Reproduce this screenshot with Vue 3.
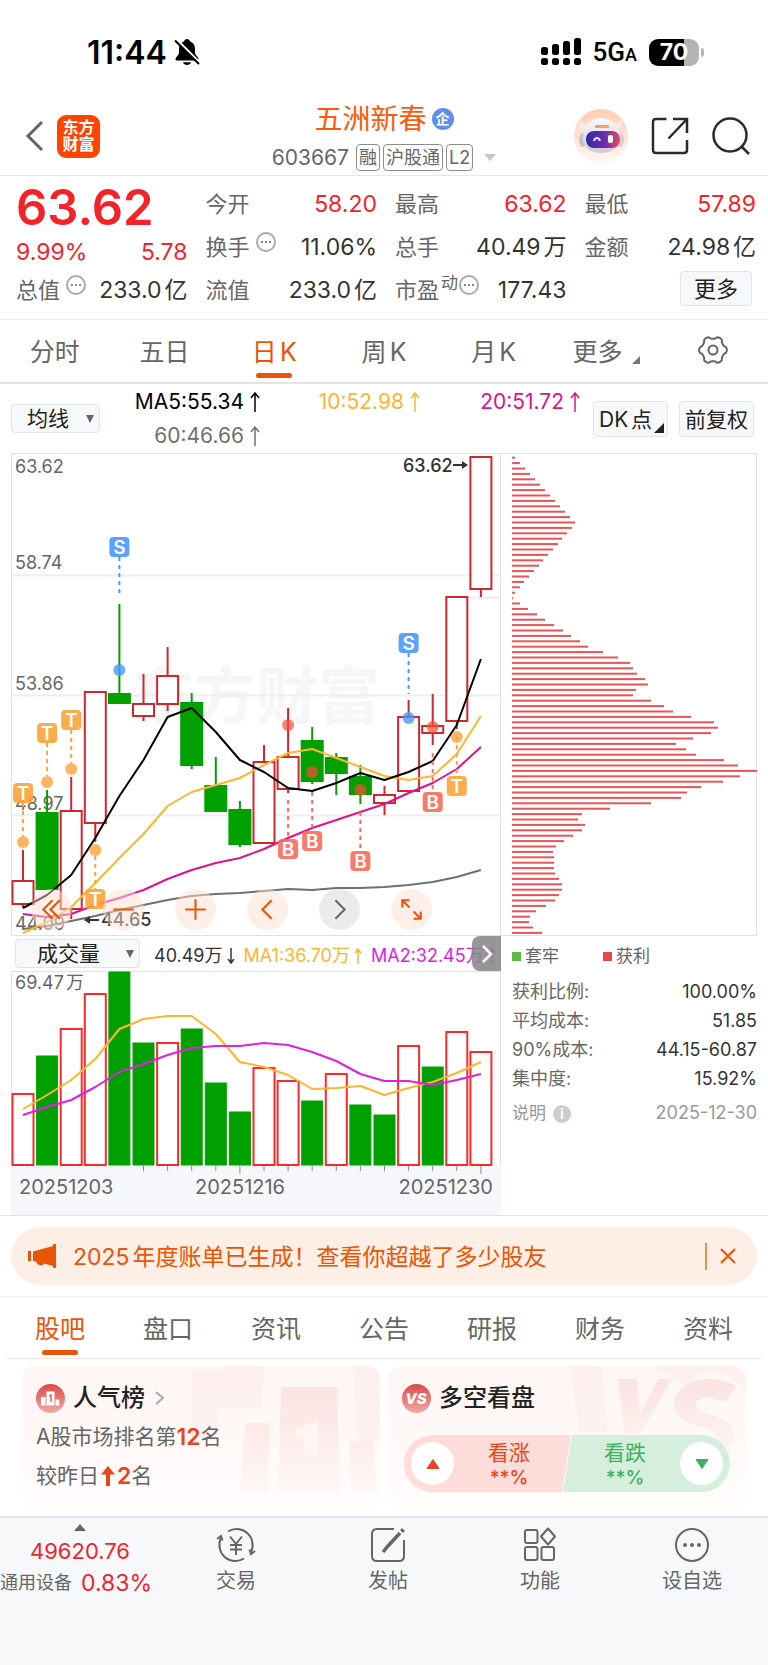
<script setup>
import {computed, ref} from "vue";

const stockTags = ['融', '沪股通', 'L2'];

const quoteColumns = [
  [
    {label: '今开', value: '58.20', red: true},
    {label: '换手', value: '11.06%', tip: true},
    {label: '流值', value: '233.0亿'},
  ],
  [
    {label: '最高', value: '63.62', red: true},
    {label: '总手', value: '40.49万'},
    {label: '市盈', sup: '动', value: '177.43', tip: true},
  ],
  [
    {label: '最低', value: '57.89', red: true},
    {label: '金额', value: '24.98亿'},
    {more: true},
  ],
];

const periods = ['分时', '五日', '日K', '周K', '月K'];
const activePeriod = ref('日K');

const averages = [
  {text: 'MA5:55.34', tone: 'black'},
  {text: '10:52.98', tone: 'yellow'},
  {text: '20:51.72', tone: 'pink'},
  {text: '60:46.66', tone: 'gray'},
];

const infoTabs = ['股吧', '盘口', '资讯', '公告', '研报', '财务', '资料'];
const activeInfo = ref('股吧');

const chipStats = [
  ['获利比例:', '100.00%'],
  ['平均成本:', '51.85'],
  ['90%成本:', '44.15-60.87'],
  ['集中度:', '15.92%'],
];

// x of the centre of the candle with the given index
const cx = (i) => Math.round((12 + i * 24.1) * 10) / 10;
const toPoints = (list) => list.map((y, i) => `${cx(i)},${y}`).join(' ');

// [rising, high, top, bottom, low]
const candles = [
  [1, 397, 428, 451, 455], [0, 337, 360, 436, 436], [1, 324, 358, 456, 466], [1, 239, 239, 370, 389],
  [0, 151, 241, 250, 251], [1, 221, 251, 263, 268], [1, 194, 223, 251, 258], [0, 240, 250, 312, 316],
  [0, 304, 333, 358, 358], [0, 348, 357, 391, 394], [1, 292, 309, 390, 391], [1, 255, 304, 336, 340],
  [0, 274, 288, 328, 331], [0, 300, 305, 320, 342], [0, 312, 324, 341, 351], [1, 333, 342, 350, 362],
  [1, 247, 264, 338, 338], [1, 241, 273, 280, 292], [1, 144, 144, 268, 276], [1, 4, 4, 136, 144],
].map(([up, high, top, bottom, low], i) => ({up, high, top, bottom, low, x: cx(i)}));

const maLines = [
  {tone: 'gray', list: [476, 473, 468, 463, 457, 452, 447, 443, 441, 440, 438, 436, 437, 435, 435, 434, 432, 429, 424, 417]},
  {tone: 'pink', list: [461, 464, 461, 452, 445, 437, 426, 417, 410, 405, 396, 385, 375, 367, 359, 351, 340, 330, 316, 294]},
  {tone: 'yellow', list: [480, 469, 454, 430, 405, 381, 353, 339, 332, 325, 312, 300, 296, 305, 314, 323, 327, 323, 301, 263]},
  {tone: 'black', list: [455, 442, 422, 385, 343, 307, 264, 255, 279, 307, 319, 335, 338, 330, 320, 327, 319, 308, 272, 206]},
];

// [index, letter, dot y, badge y, dashed line from, to]
const markers = [
  [0, 'T', 389, 340, 350, 383], [1, 'T', 329, 280, 290, 323], [2, 'T', 316, 267, 277, 310], [3, 'T', 397, 446, 403, 436],
  [4, 'S', 217, 94, 104, 144], [11, 'B', 272, 396, 347, 386], [12, 'B', 319, 388, 339, 378], [14, 'B', 337, 408, 359, 398],
  [16, 'S', 265, 190, 200, 241], [17, 'B', 274, 349, 300, 339], [18, 'T', 284, 333, 284, 323],
].map(([i, letter, dot, badge, from, to]) => ({x: cx(i), letter, dot, badge, from, to}));

const priceLabels = [['63.62', 20], ['58.74', 116], ['53.86', 237], ['48.97', 357], ['44.09', 477]];

// [rising, top]
const volumes = [
  [1, 123], [0, 85], [1, 58], [1, 23], [0, 1], [0, 72], [1, 72], [0, 58], [0, 112], [0, 141],
  [1, 97], [1, 110], [0, 130], [1, 103], [0, 134], [0, 144], [1, 75], [0, 96], [1, 61], [1, 81],
].map(([up, top], i) => ({up, top, x: cx(i)}));

const volumeLines = [
  {tone: 'yellow', list: [138, 124, 109, 88, 58, 48, 45, 45, 63, 91, 96, 104, 118, 117, 115, 124, 117, 111, 102, 91]},
  {tone: 'magenta', list: [144, 136, 129, 116, 101, 93, 84, 77, 75, 75, 72, 74, 81, 90, 103, 110, 110, 114, 109, 103]},
];

const ticks = Array.from({length: 15}, (_, n) => n + 5);

// length of every bar of the chip distribution, from the highest price down
const chips = [
  3, 8, 13, 18, 23, 28, 33, 38, 43, 48, 53, 58, 63, 60, 55, 50, 46, 41, 36, 31, 27, 22, 17, 12, 8, 3,
  1, 8, 16, 25, 33, 42, 51, 59, 68, 76, 91, 106, 118, 121, 125, 133, 136, 124, 121, 139, 152, 161, 179, 202, 206,
  199, 181, 164, 174, 184, 212, 226, 245, 228, 211, 189, 175, 169, 139, 98, 70, 66,
  73, 70, 61, 52, 44, 41, 42, 42, 42, 43, 47, 50, 50, 47, 43, 34, 24, 18, 17, 21, 30,
];

const gearPath = computed(() => {
  const points = [];
  for (let a = 0; a < 360; a += 6) {
    const t = a * Math.PI / 180;
    const r = 12.6 + 1.3 * Math.tanh(2 * Math.cos(6 * t));
    points.push(`${(15 + r * Math.cos(t)).toFixed(1)},${(15 + r * Math.sin(t)).toFixed(1)}`);
  }
  return `M${points.join('L')}Z`;
});
</script>

<template>
  <div class="page">
    <div class="status">
      <div class="status__left">
        <span class="status__time">11:44</span>
        <svg width="26" height="28" viewBox="0 0 26 28" aria-hidden="true">
          <path d="M13 1c-1.600 0-2.600 1-2.800 2.200C6.800 4.400 5 7.200 5 10.500v4.500c0 2-3.500 4-3.500 6 0 1 .6 1.500 1.500 1.500h20c.9 0 1.500-.5 1.500-1.500 0-2-3.500-4-3.500-6v-4.500c0-3.300-1.800-6.100-5.200-7.300C15.600 2 14.600 1 13 1z" fill="#000"/>
          <path d="M9 24.200h8c-.6 1.800-2 2.800-4 2.800s-3.400-1-4-2.800z" fill="#000"/>
          <path d="M2.500 1.500 27 26" stroke="#fff" stroke-width="2.500"/>
          <path d="M1 2.500 25 26" stroke="#000" stroke-width="2"/>
        </svg>
      </div>
      <div class="status__right">
        <svg width="40" height="28" viewBox="0 0 40 28" aria-hidden="true">
          <g v-for="n in 4" :key="n">
            <rect :x="(n - 1) * 11" :y="[9, 6, 3, 0][n - 1]" width="7" :height="[8, 11, 14, 17][n - 1]" rx="2.500"/>
            <rect :x="(n - 1) * 11" y="20" width="7" height="7" rx="2.500"/>
          </g>
        </svg>
        <span class="status__net">5G<small>A</small></span>
        <span class="battery"><span class="battery__body">70</span><span class="battery__tip"></span></span>
      </div>
    </div>

    <header class="header">
      <div class="header__left">
        <button class="plain" aria-label="返回">
          <svg width="20" height="32" viewBox="0 0 20 32" fill="none" stroke="#666" stroke-width="3"><path d="M17 2 3 16l14 14"/></svg>
        </button>
        <a class="logo" href="#">东方<br>财富</a>
      </div>
      <div class="header__center">
        <h1 class="title">五洲新春<span class="title__badge">企</span></h1>
        <div class="sub">
          <span class="sub__code">603667</span>
          <span v-for="tag in stockTags" :key="tag" class="sub__tag">{{ tag }}</span>
          <span class="sub__arrow"></span>
        </div>
      </div>
      <div class="header__right">
        <button class="plain" aria-label="助手">
          <svg width="54" height="54" viewBox="0 0 54 54">
            <defs>
              <linearGradient id="halo" x1="0" y1="0" x2="0" y2="1">
                <stop offset="0" stop-color="#ffcdb2"/><stop offset="1" stop-color="#fff8f4"/>
              </linearGradient>
              <linearGradient id="visor" x1="0" y1="0" x2="1" y2="0">
                <stop offset="0" stop-color="#2f2aa0"/><stop offset=".55" stop-color="#6a2bb0"/><stop offset="1" stop-color="#ee4a5c"/>
              </linearGradient>
              <linearGradient id="shell" x1="0" y1="0" x2="0" y2="1">
                <stop offset="0" stop-color="#fdfafa"/><stop offset="1" stop-color="#cfc9d2"/>
              </linearGradient>
            </defs>
            <circle cx="27" cy="27" r="27" fill="url(#halo)"/>
            <path d="M6 12c-2 5 1 9 6 10l5-7c-4 1-9 1-11-3zM47 11c2 5 0 9-5 10l-6-7c5 1 9 1 11-3z" fill="#f3ecec"/>
            <ellipse cx="9" cy="31" rx="4" ry="7" fill="#c5c0ca"/>
            <ellipse cx="46" cy="31" rx="4" ry="7" fill="#d5cfd6"/>
            <path d="M27 9c11 0 19 8 19 19 0 11-8 16-19 16S9 39 9 29C9 17 16 9 27 9z" fill="url(#shell)"/>
            <rect x="21" y="16" width="14" height="3" rx="1" fill="#eba374"/>
            <rect x="12" y="22" width="34" height="17" rx="8" fill="url(#visor)"/>
            <path d="M20 32c1-4 5-4 6 0" fill="none" stroke="#f6d8ff" stroke-width="2"/>
            <rect x="34" y="26" width="5" height="8" rx="2" fill="#fff"/>
          </svg>
        </button>
        <button class="plain" aria-label="分享">
          <svg width="38" height="38" viewBox="0 0 38 38" fill="none" stroke="#2b2b2b" stroke-width="2.500">
            <path d="M15.500 2H5Q2 2 2 5v28q0 3 3 3h28q3 0 3-3V23M22 2h14v14M36 2 17.500 21.500"/>
          </svg>
        </button>
        <button class="plain" aria-label="搜索">
          <svg width="38" height="38" viewBox="0 0 38 38" fill="none" stroke="#2b2b2b" stroke-width="2.500">
            <circle cx="18" cy="18" r="16.500"/><path d="m29 29 8 8"/>
          </svg>
        </button>
      </div>
    </header>

    <section class="quote">
      <div class="quote__col">
        <div class="quote__price">63.62</div>
        <div class="quote__change"><span>9.99%</span><span>5.78</span></div>
        <div class="quote__row">
          <span class="quote__label">总值<i class="tip"><i></i></i></span>
          <span class="quote__value">233.0亿</span>
        </div>
      </div>
      <div v-for="(column, c) in quoteColumns" :key="c" class="quote__col">
        <div v-for="(item, r) in column" :key="r" class="quote__row">
          <button v-if="item.more" class="box-button quote__more">更多</button>
          <template v-else>
            <span class="quote__label">{{ item.label }}<sup v-if="item.sup">{{ item.sup }}</sup><i v-if="item.tip" class="tip" :class="{'tip--tight': item.sup}"><i></i></i></span>
            <span class="quote__value" :class="{'quote__value--red': item.red}">{{ item.value }}</span>
          </template>
        </div>
      </div>
    </section>

    <nav class="tabs">
      <button v-for="name in periods" :key="name" class="tab" :class="{'tab--active': name === activePeriod}" @click="activePeriod = name">{{ name }}</button>
      <button class="tab">更多<span class="corner corner--gray"></span></button>
      <button class="tab" aria-label="设置">
        <svg width="30" height="30" viewBox="0 0 30 30" fill="none" stroke="#666" stroke-width="2" stroke-linejoin="round">
          <path :d="gearPath"/><circle cx="15" cy="15" r="4.500"/>
        </svg>
      </button>
    </nav>

    <section class="ma">
      <label class="select select--ma">
        <select aria-label="均线"><option>均线</option></select>
      </label>
      <div class="ma__list">
        <span v-for="item in averages" :key="item.text" :class="'text-' + item.tone">{{ item.text }}<svg class="arrow" width="10" height="20" viewBox="0 0 10 20" fill="none" stroke="currentColor" stroke-width="1.500"><path d="M5 20V1M1 6l4-5 4 5"/></svg></span>
      </div>
      <button class="box-button ma__button">DK点<span class="corner"></span></button>
      <button class="box-button ma__button ma__button--last">前复权</button>
    </section>

    <section class="charts">
      <div class="charts__left">
        <div class="kline">
          <svg class="chart" viewBox="0 0 490 483">
            <text x="121" y="266" class="watermark">东方财富</text>
            <path d="M0 122.500h490M0 242.500h490M0 362.500h490M450 144.500h40" class="grid"/>
            <path d="M490 .5H.5v482H490M489.500 0v483" class="frame"/>
            <text v-for="[text, y] in priceLabels" :key="text" x="4" :y="y" class="label">{{ text }}</text>
            <g v-for="c in candles" :key="c.x" :class="c.up ? 'candle-up' : 'candle-down'">
              <path :d="`M${c.x} ${c.high}V${c.top}M${c.x} ${c.bottom}V${c.low}`"/>
              <rect :x="c.x - 10.5" :y="c.top" width="21" :height="c.bottom - c.top"/>
            </g>
            <polyline v-for="line in maLines" :key="line.tone" :points="toPoints(line.list)" class="line" :class="'text-' + line.tone"/>
            <g v-for="m in markers" :key="m.x" :class="'marker marker-' + m.letter">
              <path :d="`M${m.x} ${m.from}V${m.to}`"/>
              <circle :cx="m.x" :cy="m.dot" r="6"/>
              <rect :x="m.x - 10" :y="m.badge - 10" width="20" height="20" rx="4"/>
              <text :x="m.x" :y="m.badge + 7">{{ m.letter }}</text>
            </g>
            <text x="392" y="19" class="label label--strong">63.62</text>
            <path d="M442 12h13" class="pointer"/><path d="m451 8 6 4-6 4z" fill="#333"/>
            <text x="90" y="473" class="label label--strong">44.65</text>
            <path d="M76 467h12" class="pointer"/><path d="m79 463-6 4 6 4z" fill="#333"/>
          </svg>
          <div class="tools">
            <button class="tool" aria-label="最早"><svg viewBox="0 0 40 40"><path d="M21 11l-9 9 9 9M28 11l-9 9 9 9"/></svg></button>
            <button class="tool" aria-label="缩小"><svg viewBox="0 0 40 40"><path d="M10 20h20"/></svg></button>
            <button class="tool" aria-label="放大"><svg viewBox="0 0 40 40"><path d="M10 20h20M20 10v20"/></svg></button>
            <button class="tool" aria-label="向左"><svg viewBox="0 0 40 40"><path d="M24 11l-9 9 9 9"/></svg></button>
            <button class="tool tool--gray" aria-label="向右"><svg viewBox="0 0 40 40"><path d="M16 11l9 9-9 9"/></svg></button>
            <button class="tool" aria-label="全屏"><svg viewBox="0 0 40 40"><path d="M11 18v-7h7M11 11l7 7M29 22v7h-7M29 29l-7-7"/></svg></button>
          </div>
        </div>

        <div class="volume-head">
          <label class="select select--volume">
            <select aria-label="指标"><option>成交量</option></select>
          </label>
          <span class="text-dark">40.49万<svg class="arrow arrow--small" width="8" height="16" viewBox="0 0 8 16" fill="none" stroke="currentColor" stroke-width="1.500"><path d="M4 0v15M1 11l3 4 3-4"/></svg></span>
          <span class="text-yellow">MA1:36.70万<svg class="arrow arrow--small" width="8" height="16" viewBox="0 0 8 16" fill="none" stroke="currentColor" stroke-width="1.500"><path d="M4 16V1M1 5l3-4 3 4"/></svg></span>
          <span class="text-magenta">MA2:32.45万<svg class="arrow arrow--small" width="8" height="16" viewBox="0 0 8 16" fill="none" stroke="currentColor" stroke-width="1.500"><path d="M4 16V1M1 5l3-4 3 4"/></svg></span>
          <button class="volume-head__next" aria-label="展开">
            <svg width="12" height="18" viewBox="0 0 12 18" fill="none" stroke="#fff" stroke-width="2.500"><path d="M2 1l8 8-8 8"/></svg>
          </button>
        </div>

        <svg class="chart" viewBox="0 0 490 195">
          <path d="M490 .5H.5V195M489.500 0v195" class="frame"/>
          <text x="4" y="18" class="label label--spaced">69.47万</text>
          <rect v-for="v in volumes" :key="v.x" :x="v.x - 10.5" :y="v.top" width="21" :height="194 - v.top" :class="v.up ? 'volume-up' : 'volume-down'"/>
          <polyline v-for="line in volumeLines" :key="line.tone" :points="toPoints(line.list)" class="line" :class="'text-' + line.tone"/>
        </svg>
        <svg class="chart axis" viewBox="0 0 490 49">
          <path v-for="i in ticks" :key="i" :d="`M${cx(i)} 0v${i === 9 || i === 19 ? 8 : 5}`" stroke="#8a8a8a"/>
          <text x="8" y="28">20251203</text>
          <text x="229" y="28" text-anchor="middle">20251216</text>
          <text x="482" y="28" text-anchor="end">20251230</text>
        </svg>
      </div>

      <div class="charts__right">
        <svg class="chart" viewBox="0 0 256 483">
          <path d="M0 .5h255.500v482H0" class="frame"/>
          <rect v-for="(w, i) in chips" :key="i" x="11" :y="(3.7 + i * 5.4).toFixed(1)" :width="w" height="2" fill="#ea5456"/>
        </svg>
        <div class="legend">
          <span class="legend__item"><i class="legend__mark legend__mark--green"></i>套牢</span>
          <span class="legend__item"><i class="legend__mark legend__mark--red"></i>获利</span>
        </div>
        <dl class="stats">
          <div v-for="[name, value] in chipStats" :key="name" class="stats__row">
            <dt>{{ name }}</dt><dd>{{ value }}</dd>
          </div>
        </dl>
        <div class="note"><span>说明<i class="note__info">i</i></span><span class="note__date">2025-12-30</span></div>
      </div>
    </section>

    <div class="banner-wrap">
      <div class="banner">
        <svg width="28" height="24" viewBox="0 0 28 24" fill="#ea5504" aria-hidden="true">
          <path d="M0 7h3v10H0zM5 7.500 25 2V0h3v24h-3v-2l-9-2.500-2 2-4-1-2-3-3-.5z"/>
        </svg>
        <a class="banner__text" href="#">2025年度账单已生成！查看你超越了多少股友</a>
        <button class="plain banner__close" aria-label="关闭">
          <svg width="16" height="16" viewBox="0 0 16 16" stroke="#ea5504" stroke-width="2"><path d="M1 1l14 14M15 1 1 15"/></svg>
        </button>
      </div>
    </div>

    <nav class="tabs tabs--info">
      <button v-for="name in infoTabs" :key="name" class="tab" :class="{'tab--active': name === activeInfo}" @click="activeInfo = name">{{ name }}</button>
    </nav>

    <section class="cards">
      <article class="card">
        <svg class="card__art" viewBox="0 0 190 142" width="190" height="142" aria-hidden="true">
          <defs>
            <linearGradient id="fade" x1="0" y1="0" x2="0" y2="1">
              <stop offset="0" stop-color="#f9d9d7" stop-opacity=".65"/><stop offset="1" stop-color="#f9d9d7" stop-opacity=".1"/>
            </linearGradient>
            <linearGradient id="disc" x1="0" y1="0" x2="0" y2="1">
              <stop offset="0" stop-color="#d94a48"/><stop offset="1" stop-color="#f0aaa6"/>
            </linearGradient>
          </defs>
          <path d="M2 4h32V0h40l-3 42H27v30H2zM164 0h26v75h-24z" fill="#fbe6e4" opacity=".35"/>
          <path d="M91 21h56l3 107H88zM55 57h25l-3 71H50zM160 75h23l4 53h-26z" fill="url(#fade)"/>
          <path d="M106 62l22-7v34h-14V70l-8 2z" fill="#fff6f4"/>
        </svg>
        <h2 class="card__title">
          <svg width="29" height="29" viewBox="0 0 29 29">
            <circle cx="14.500" cy="14.500" r="14.500" fill="url(#disc)"/>
            <path d="M10.500 7.500h8v14h-8zM5 13h4.500v8.500H5zM19.500 15.500h3.500l.5 6h-4z" fill="#fff"/>
            <path d="M13 12l2-1v7" fill="none" stroke="#d96a66" stroke-width="1.500"/>
          </svg>
          人气榜
          <svg class="card__more" width="10" height="14" viewBox="0 0 10 14" fill="none" stroke="#aaa" stroke-width="2"><path d="M1 1l7 6-7 6"/></svg>
        </h2>
        <p class="card__line">A股市场排名第<b>12</b>名</p>
        <p class="card__line">较昨日<svg width="14" height="20" viewBox="0 0 14 20" fill="#e8461a"><path d="M7 0l7 8.500H9V20H5V8.500H0z"/></svg><b class="card__step">2</b>名</p>
      </article>

      <article class="card">
        <svg class="card__art" viewBox="0 0 190 142" width="190" height="142" aria-hidden="true">
          <path d="M15 0h30l7 66H23zM98 0h92v26c-8-12-22-22-40-22l-22 14z" fill="#fbe6e4" opacity=".35"/>
          <path d="M62 13h19l3 34 18-34h14L84 67H69zM180 20c-32-16-62-2-62 18 0 26 42 18 42 34 0 8-22 8-32 2v16c22 8 50 0 50-20 0-24-38-18-38-32 0-10 20-6 30-2z" fill="url(#fade)"/>
        </svg>
        <h2 class="card__title">
          <svg width="29" height="29" viewBox="0 0 29 29">
            <circle cx="14.500" cy="14.500" r="14.500" fill="url(#disc)"/>
            <text x="14" y="20" class="card__vs">VS</text>
          </svg>
          多空看盘
        </h2>
        <div class="vote">
          <button class="vote__side vote__side--up">
            <span class="vote__disc"><svg width="14" height="12" viewBox="0 0 14 12"><path d="M7 1.500 13 10.500H1z" fill="#e8461a" stroke="#e8461a" stroke-linejoin="round"/></svg></span>
            <span class="vote__text">看涨<b>**%</b></span>
          </button>
          <button class="vote__side vote__side--down">
            <span class="vote__text">看跌<b>**%</b></span>
            <span class="vote__disc"><svg width="14" height="12" viewBox="0 0 14 12"><path d="M1 1.500h12L7 10.500z" fill="#3eb05f" stroke="#3eb05f" stroke-linejoin="round"/></svg></span>
          </button>
        </div>
      </article>
    </section>

    <footer class="bottom">
      <a class="index" href="#">
        <span class="index__caret"></span>
        <span class="index__value">49620.76</span>
        <span class="index__row"><span class="index__name">通用设备</span>0.83%</span>
      </a>
      <button class="bottom__item">
        <svg width="40" height="36" viewBox="0 0 40 36">
          <path d="M12 4.500A16 16 0 0 1 35 25M28 31.500A16 16 0 0 1 5 11M1 12l4-3 1.500 4.500M39 24l-4 3-1.500-4.500M14 9.500l6 7.500 6-7.500M20 17v11M14 18h12M14 22.500h12"/>
        </svg>
        交易
      </button>
      <button class="bottom__item">
        <svg width="36" height="36" viewBox="0 0 36 36">
          <path d="M24 2H7Q2 2 2 7v22q0 5 5 5h22q5 0 5-5V13"/>
          <path d="M30 6 18 19l-5 6" stroke-width="3.500"/><path d="m31.500 4.500 2-2" stroke-width="4"/>
        </svg>
        发帖
      </button>
      <button class="bottom__item">
        <svg width="36" height="36" viewBox="0 0 36 36">
          <rect x="3" y="3" width="12.500" height="13" rx="2"/><rect x="3" y="20" width="12.500" height="13" rx="2"/><rect x="19.500" y="20" width="12.500" height="13" rx="2"/>
          <path d="M26 1.500l7 8-7 8-7-8z" stroke-linejoin="round"/>
        </svg>
        功能
      </button>
      <button class="bottom__item">
        <svg width="36" height="36" viewBox="0 0 36 36">
          <circle cx="18" cy="18" r="16"/>
          <g fill="#666" stroke="none"><circle cx="11" cy="18" r="2"/><circle cx="18" cy="18" r="2"/><circle cx="25" cy="18" r="2"/></g>
        </svg>
        设自选
      </button>
    </footer>
  </div>
</template>

<style>
body {
  margin: 0;
  background: #fff;
}
</style>

<style scoped>
.page {
  font-family: Inter, "Noto Sans CJK SC", sans-serif;
  color: #333;
  background: #fff;
}

.page *,
.page *::after {
  box-sizing: border-box;
}

button,
select {
  font-family: inherit;
  color: inherit;
  margin: 0;
  padding: 0;
  border: 0;
  background: none;
}

a {
  color: inherit;
  text-decoration: none;
}

.plain {
  display: flex;
}

.status {
  display: flex;
  align-items: center;
  justify-content: space-between;
  height: 100px;
  padding: 4px 64px 0 87px;
  color: #000;
}

.status__left,
.status__right {
  display: flex;
  align-items: center;
}

.status__left {
  gap: 7px;
}

.status__time {
  font-size: 32px;
  font-weight: 600;
}

.status__net {
  margin: 0 12px 0 12px;
  font-family: "Roboto", Inter, sans-serif;
  font-size: 26px;
  font-weight: 500;
}

.status__net small {
  font-size: 18px;
}

.battery {
  display: flex;
  align-items: center;
  gap: 2px;
}

.battery__body {
  width: 50px;
  height: 27px;
  border-radius: 9px;
  background: linear-gradient(to right, #000 70%, #b3b3b3 70%);
  color: #fff;
  font-size: 23px;
  font-weight: 700;
  line-height: 27px;
  text-align: center;
}

.battery__tip {
  width: 3px;
  height: 9px;
  border-radius: 0 4px 4px 0;
  background: #b3b3b3;
}

.header {
  display: grid;
  grid-template-columns: 1fr auto 1fr;
  align-items: center;
  height: 76px;
  padding: 0 18px 4px;
  border-bottom: 1px solid #e6e6e8;
}

.header__left {
  display: flex;
  align-items: center;
  gap: 12px;
  padding-left: 7px;
}

.logo {
  width: 43px;
  height: 43px;
  padding-top: 4px;
  border-radius: 9px;
  background: #ff4400;
  color: #fff;
  font-size: 16px;
  font-weight: 700;
  line-height: 17px;
  text-align: center;
}

.title {
  display: flex;
  align-items: center;
  justify-content: center;
  gap: 5px;
  margin: 0;
  color: #ff5a0a;
  font-size: 28px;
  font-weight: 400;
  line-height: 38px;
}

.title__badge {
  width: 22px;
  height: 22px;
  border-radius: 50%;
  background: #5f8df0;
  color: #fff;
  font-size: 14px;
  font-weight: 700;
  line-height: 22px;
  text-align: center;
}

.sub {
  display: flex;
  align-items: center;
  gap: 3px;
  height: 34px;
  padding-top: 4px;
  color: #666;
  font-size: 18px;
}

.sub__code {
  margin-right: 4px;
  font-size: 21px;
}

.sub__tag {
  height: 27px;
  padding: 0 2px;
  border: 1px solid #8c8c8c;
  border-radius: 4px;
  line-height: 25px;
}

.sub__arrow {
  margin-left: 8px;
  border: 6px solid transparent;
  border-top: 7px solid #c8c8c8;
  border-bottom: 0;
}

.header__right {
  display: flex;
  align-items: center;
  justify-content: flex-end;
  gap: 23px;
}

.quote {
  display: grid;
  grid-template-columns: repeat(4, 1fr);
  gap: 18px;
  padding: 6px 12px 8px 16px;
  border-bottom: 1px solid #ececee;
  font-size: 22px;
}

.quote__price {
  height: 51px;
  color: #f5222a;
  font-size: 49px;
  font-weight: 600;
  line-height: 51px;
}

.quote__change {
  display: flex;
  align-items: center;
  justify-content: space-between;
  height: 35px;
  padding-top: 3px;
  color: #f5222a;
  font-size: 23px;
}

.quote__row {
  display: flex;
  align-items: center;
  justify-content: space-between;
  height: 43px;
  line-height: 32px;
}

.quote__label {
  display: flex;
  color: #666;
}

.quote__label sup {
  margin-left: 2px;
  font-size: 17px;
  line-height: 18px;
}

.quote__value {
  color: #333;
  font-size: 23px;
  text-autospace: normal;
}

.quote__value--red {
  color: #f5222a;
}

.tip {
  display: flex;
  align-items: center;
  justify-content: center;
  width: 20px;
  height: 20px;
  margin: 1px 0 0 6px;
  border: 2px solid #aaa;
  border-radius: 50%;
}

.tip--tight {
  margin-left: 1px;
}

.tip i {
  width: 10px;
  border-top: 2px dotted #888;
}

.box-button {
  border: 1px solid #e0e3e9;
  border-radius: 4px;
  background: #f7f8fa;
  color: #222;
}

.quote__more {
  width: 72px;
  height: 35px;
  margin: 0 4px 2px auto;
  font-size: 22px;
  line-height: 30px;
}

.tabs {
  display: grid;
  grid-template-columns: repeat(7, 1fr);
  height: 64px;
  border-bottom: 2px solid #e3e4ea;
}

.tab {
  position: relative;
  display: flex;
  align-items: center;
  justify-content: center;
  padding-bottom: 2px;
  color: #666;
  font-size: 25px;
  text-autospace: normal;
}

.tab--active {
  color: #ea5504;
}

.tab--active::after {
  content: "";
  position: absolute;
  bottom: 4px;
  left: 50%;
  width: 36px;
  height: 5px;
  margin-left: -18px;
  border-radius: 3px;
  background: #ea5504;
}

.corner {
  align-self: flex-end;
  border: 5px solid #222;
  border-top-color: transparent;
  border-left-color: transparent;
}

.corner--gray {
  margin: 0 -6px 16px 10px;
  border-width: 4px;
  border-right-color: #777;
  border-bottom-color: #777;
}

.ma {
  display: flex;
  align-items: center;
  height: 69px;
  padding: 0 14px 0 11px;
}

.select {
  position: relative;
  display: block;
}

.select::after {
  content: "";
  position: absolute;
  top: 11px;
  right: 6px;
  border: 4px solid transparent;
  border-top: 8px solid #666;
  border-bottom: 0;
  pointer-events: none;
}

.select select {
  width: 100%;
  height: 29px;
  border: 1px solid #e0e3e9;
  border-radius: 4px;
  background: #f7f8fa;
  color: #222;
  font-size: 21px;
  line-height: 27px;
  appearance: none;
}

.select--ma {
  width: 89px;
}

.select--ma select {
  padding-left: 15px;
}

.ma__list {
  display: grid;
  flex: 1;
  grid-template-columns: repeat(3, 1fr);
  font-size: 21px;
  line-height: 34px;
  text-align: right;
  white-space: nowrap;
}

.arrow {
  margin-left: 6px;
  vertical-align: -3px;
}

.arrow--small {
  vertical-align: -2px;
}

.ma__button {
  display: flex;
  align-items: center;
  justify-content: center;
  width: 75px;
  height: 36px;
  margin-left: 13px;
  padding-bottom: 2px;
  font-size: 21px;
  text-autospace: normal;
}

.ma__button .corner {
  margin: 0 -2px 1px 2px;
}

.ma__button--last {
  margin-left: 11px;
}

.text-black {
  color: #000;
}

.text-dark {
  color: #333;
}

.text-yellow {
  color: #ffb52e;
}

.text-pink {
  color: #e0128a;
}

.text-gray {
  color: #707070;
}

.text-magenta {
  color: #e01ee6;
}

.charts {
  display: grid;
  grid-template-columns: 490fr 256fr;
  padding: 0 11px;
  border-bottom: 1px solid #e6e6e8;
}

.charts__left,
.charts__right {
  min-width: 0;
}

.chart {
  display: block;
  width: 100%;
}

.kline {
  position: relative;
}

.frame,
.grid,
.pointer,
.line {
  fill: none;
}

.frame {
  stroke: #dfe1e8;
}

.grid {
  stroke: #eceef4;
  stroke-width: 2;
}

.pointer {
  stroke: #333;
  stroke-width: 2;
}

.line {
  stroke: currentColor;
  stroke-width: 2;
  stroke-linejoin: round;
}

.watermark {
  fill: #f6f6f7;
  font-size: 62px;
  font-weight: 700;
}

.label {
  fill: #666;
  font-size: 18px;
}

.label--spaced {
  text-autospace: normal;
}

.label--strong {
  fill: #333;
  font-weight: 500;
}

.candle-up {
  fill: #fff;
  stroke: #d0262c;
  stroke-width: 2;
}

.candle-down {
  fill: #00a000;
  stroke: #00a000;
  stroke-width: 2;
}

.volume-up {
  fill: #fff;
  stroke: #fa2a2a;
  stroke-width: 2;
}

.volume-down {
  fill: #00a000;
  stroke: #00a000;
}

.marker path {
  fill: none;
  stroke: currentColor;
  stroke-width: 2;
  stroke-dasharray: 4 4;
}

.marker circle {
  fill: currentColor;
  opacity: .8;
}

.marker rect {
  fill: currentColor;
  opacity: .9;
}

.marker text {
  fill: #fff;
  font-size: 19px;
  font-weight: 600;
  text-anchor: middle;
}

.marker-T {
  color: #fda33a;
}

.marker-S {
  color: #4a97fc;
}

.marker-B {
  color: #fd6a5a;
}

.marker-B circle {
  fill: #fd4a35;
  opacity: .7;
}

.tools {
  position: absolute;
  bottom: 6px;
  left: 20px;
  display: flex;
  gap: 31px;
}

.tool {
  width: 41px;
  height: 41px;
  border-radius: 50%;
  background: rgba(253, 226, 212, .5);
  color: #ea5504;
}

.tool--gray {
  background: rgba(210, 210, 210, .45);
  color: #666;
}

.tool svg {
  display: block;
  fill: none;
  stroke: currentColor;
  stroke-width: 2;
}

.volume-head {
  position: relative;
  display: flex;
  align-items: center;
  gap: 9px;
  height: 35px;
  padding-left: 4px;
  overflow: hidden;
  font-size: 18px;
  white-space: nowrap;
}

.select--volume {
  flex: none;
  width: 125px;
  margin-right: 5px;
}

.select--volume select {
  padding-left: 21px;
}

.volume-head .arrow {
  margin-left: 4px;
}

.volume-head__next {
  position: absolute;
  top: 0;
  right: 0;
  display: flex;
  align-items: center;
  justify-content: center;
  width: 29px;
  height: 35px;
  border-radius: 8px 0 0 8px;
  background: rgba(136, 136, 136, .88);
}

.axis {
  background: #f6f7fa;
}

.axis text {
  fill: #666;
  font-size: 20px;
}

.legend {
  display: grid;
  grid-template-columns: 91px 1fr;
  padding-left: 11px;
  color: #666;
  font-size: 17px;
  line-height: 40px;
}

.legend__item {
  display: flex;
  align-items: center;
  gap: 4px;
}

.legend__mark {
  width: 9px;
  height: 9px;
}

.legend__mark--green {
  background: #5cb944;
}

.legend__mark--red {
  background: #e84848;
}

.stats {
  margin: 0;
  padding: 2px 0 0 11px;
  font-size: 18px;
}

.stats__row {
  display: flex;
  justify-content: space-between;
  line-height: 28px;
}

.stats__row + .stats__row {
  margin-top: 1px;
}

.stats dt {
  color: #666;
  text-autospace: normal;
}

.stats dd {
  margin: 0;
}

.note {
  display: flex;
  justify-content: space-between;
  padding: 6px 0 0 11px;
  color: #999;
  font-size: 17px;
  line-height: 28px;
}

.note__date {
  font-size: 18px;
}

.note__info {
  display: inline-block;
  width: 18px;
  height: 18px;
  margin-left: 7px;
  border-radius: 50%;
  background: #ccc;
  color: #fff;
  font-size: 14px;
  font-style: normal;
  font-weight: 700;
  line-height: 18px;
  text-align: center;
}

.banner-wrap {
  padding: 11px;
  border-bottom: 1px solid #eceef5;
}

.banner {
  display: flex;
  align-items: center;
  gap: 17px;
  height: 58px;
  padding: 0 21px 0 17px;
  border-radius: 29px;
  background: #fdeee6;
  color: #ea5504;
}

.banner__text {
  flex: 1;
  padding-bottom: 2px;
  font-size: 23px;
  text-autospace: normal;
}

.banner__close {
  align-items: center;
  height: 27px;
  padding-left: 13px;
  border-left: 2px solid #f08a54;
}

.tabs--info {
  height: 62px;
  margin: 0 6px;
  border-bottom: 1px solid #e6e6e8;
}

.tabs--info .tab--active::after {
  bottom: 3px;
}

.cards {
  display: grid;
  grid-template-columns: 1fr 1fr;
  gap: 8px;
  padding: 7px 22px 8px;
}

.card {
  position: relative;
  min-height: 142px;
  padding: 14px 14px 0;
  overflow: hidden;
  border-radius: 14px;
  background: linear-gradient(#fef6f4, #fff9f8 60%, #fffdfd);
}

.card__art {
  position: absolute;
  top: 0;
  right: 0;
}

.card__title {
  position: relative;
  display: flex;
  align-items: center;
  gap: 8px;
  margin: 0;
  color: #222;
  font-size: 24px;
  font-weight: 500;
  line-height: 36px;
}

.card__more {
  margin-left: 2px;
}

.card__vs {
  fill: #fff;
  font-size: 15px;
  font-style: italic;
  font-weight: 800;
  text-anchor: middle;
}

.card__line {
  position: relative;
  display: flex;
  align-items: center;
  margin: 3px 0 0;
  color: #666;
  font-size: 21px;
  line-height: 36px;
}

.card__line b {
  color: #e8461a;
  font-size: 23px;
  font-weight: 600;
}

.card__line svg,
.card__line .card__step {
  margin-left: 2px;
}

.vote {
  position: relative;
  display: grid;
  grid-template-columns: 1fr 1fr;
  height: 57px;
  margin: 19px 2px 0;
  overflow: hidden;
  border-radius: 29px;
  background: #fff;
}

.vote__side {
  display: flex;
  align-items: center;
  padding: 0 7px;
}

.vote__side--up {
  margin-right: -4px;
  background: #fddcd9;
  color: #e8461a;
  clip-path: polygon(0 0, 100% 0, calc(100% - 9px) 100%, 0 100%);
}

.vote__side--down {
  margin-left: -4px;
  background: #d5eedd;
  color: #3eb05f;
  clip-path: polygon(9px 0, 100% 0, 100% 100%, 0 100%);
}

.vote__disc {
  display: flex;
  align-items: center;
  justify-content: center;
  width: 43px;
  height: 43px;
  border-radius: 50%;
  background: #fff;
}

.vote__text {
  flex: 1;
  padding-top: 2px;
  font-size: 21px;
  line-height: 26px;
}

.vote__text b {
  display: block;
  font-size: 19px;
  font-weight: 500;
  line-height: 24px;
}

.bottom {
  display: grid;
  grid-template-columns: 160fr 152fr 152fr 152fr 152fr;
  padding-bottom: 66px;
  border-top: 2px solid #e1e4e9;
  background: #f7f8fa;
}

.index {
  display: flex;
  flex-direction: column;
  align-items: center;
  padding-top: 6px;
  color: #f5222a;
  white-space: nowrap;
}

.index__caret {
  border: 6px solid transparent;
  border-top: 0;
  border-bottom: 7px solid #666;
}

.index__value {
  font-size: 22px;
  line-height: 40px;
}

.index__row {
  display: flex;
  align-items: center;
  align-self: flex-start;
  gap: 9px;
  font-size: 23px;
  line-height: 24px;
}

.index__name {
  color: #666;
  font-size: 18px;
}

.bottom__item {
  display: flex;
  flex-direction: column;
  align-items: center;
  padding-top: 9px;
  color: #666;
  font-size: 20px;
  line-height: 37px;
}

.bottom__item svg {
  fill: none;
  stroke: #666;
  stroke-width: 2;
}
</style>
